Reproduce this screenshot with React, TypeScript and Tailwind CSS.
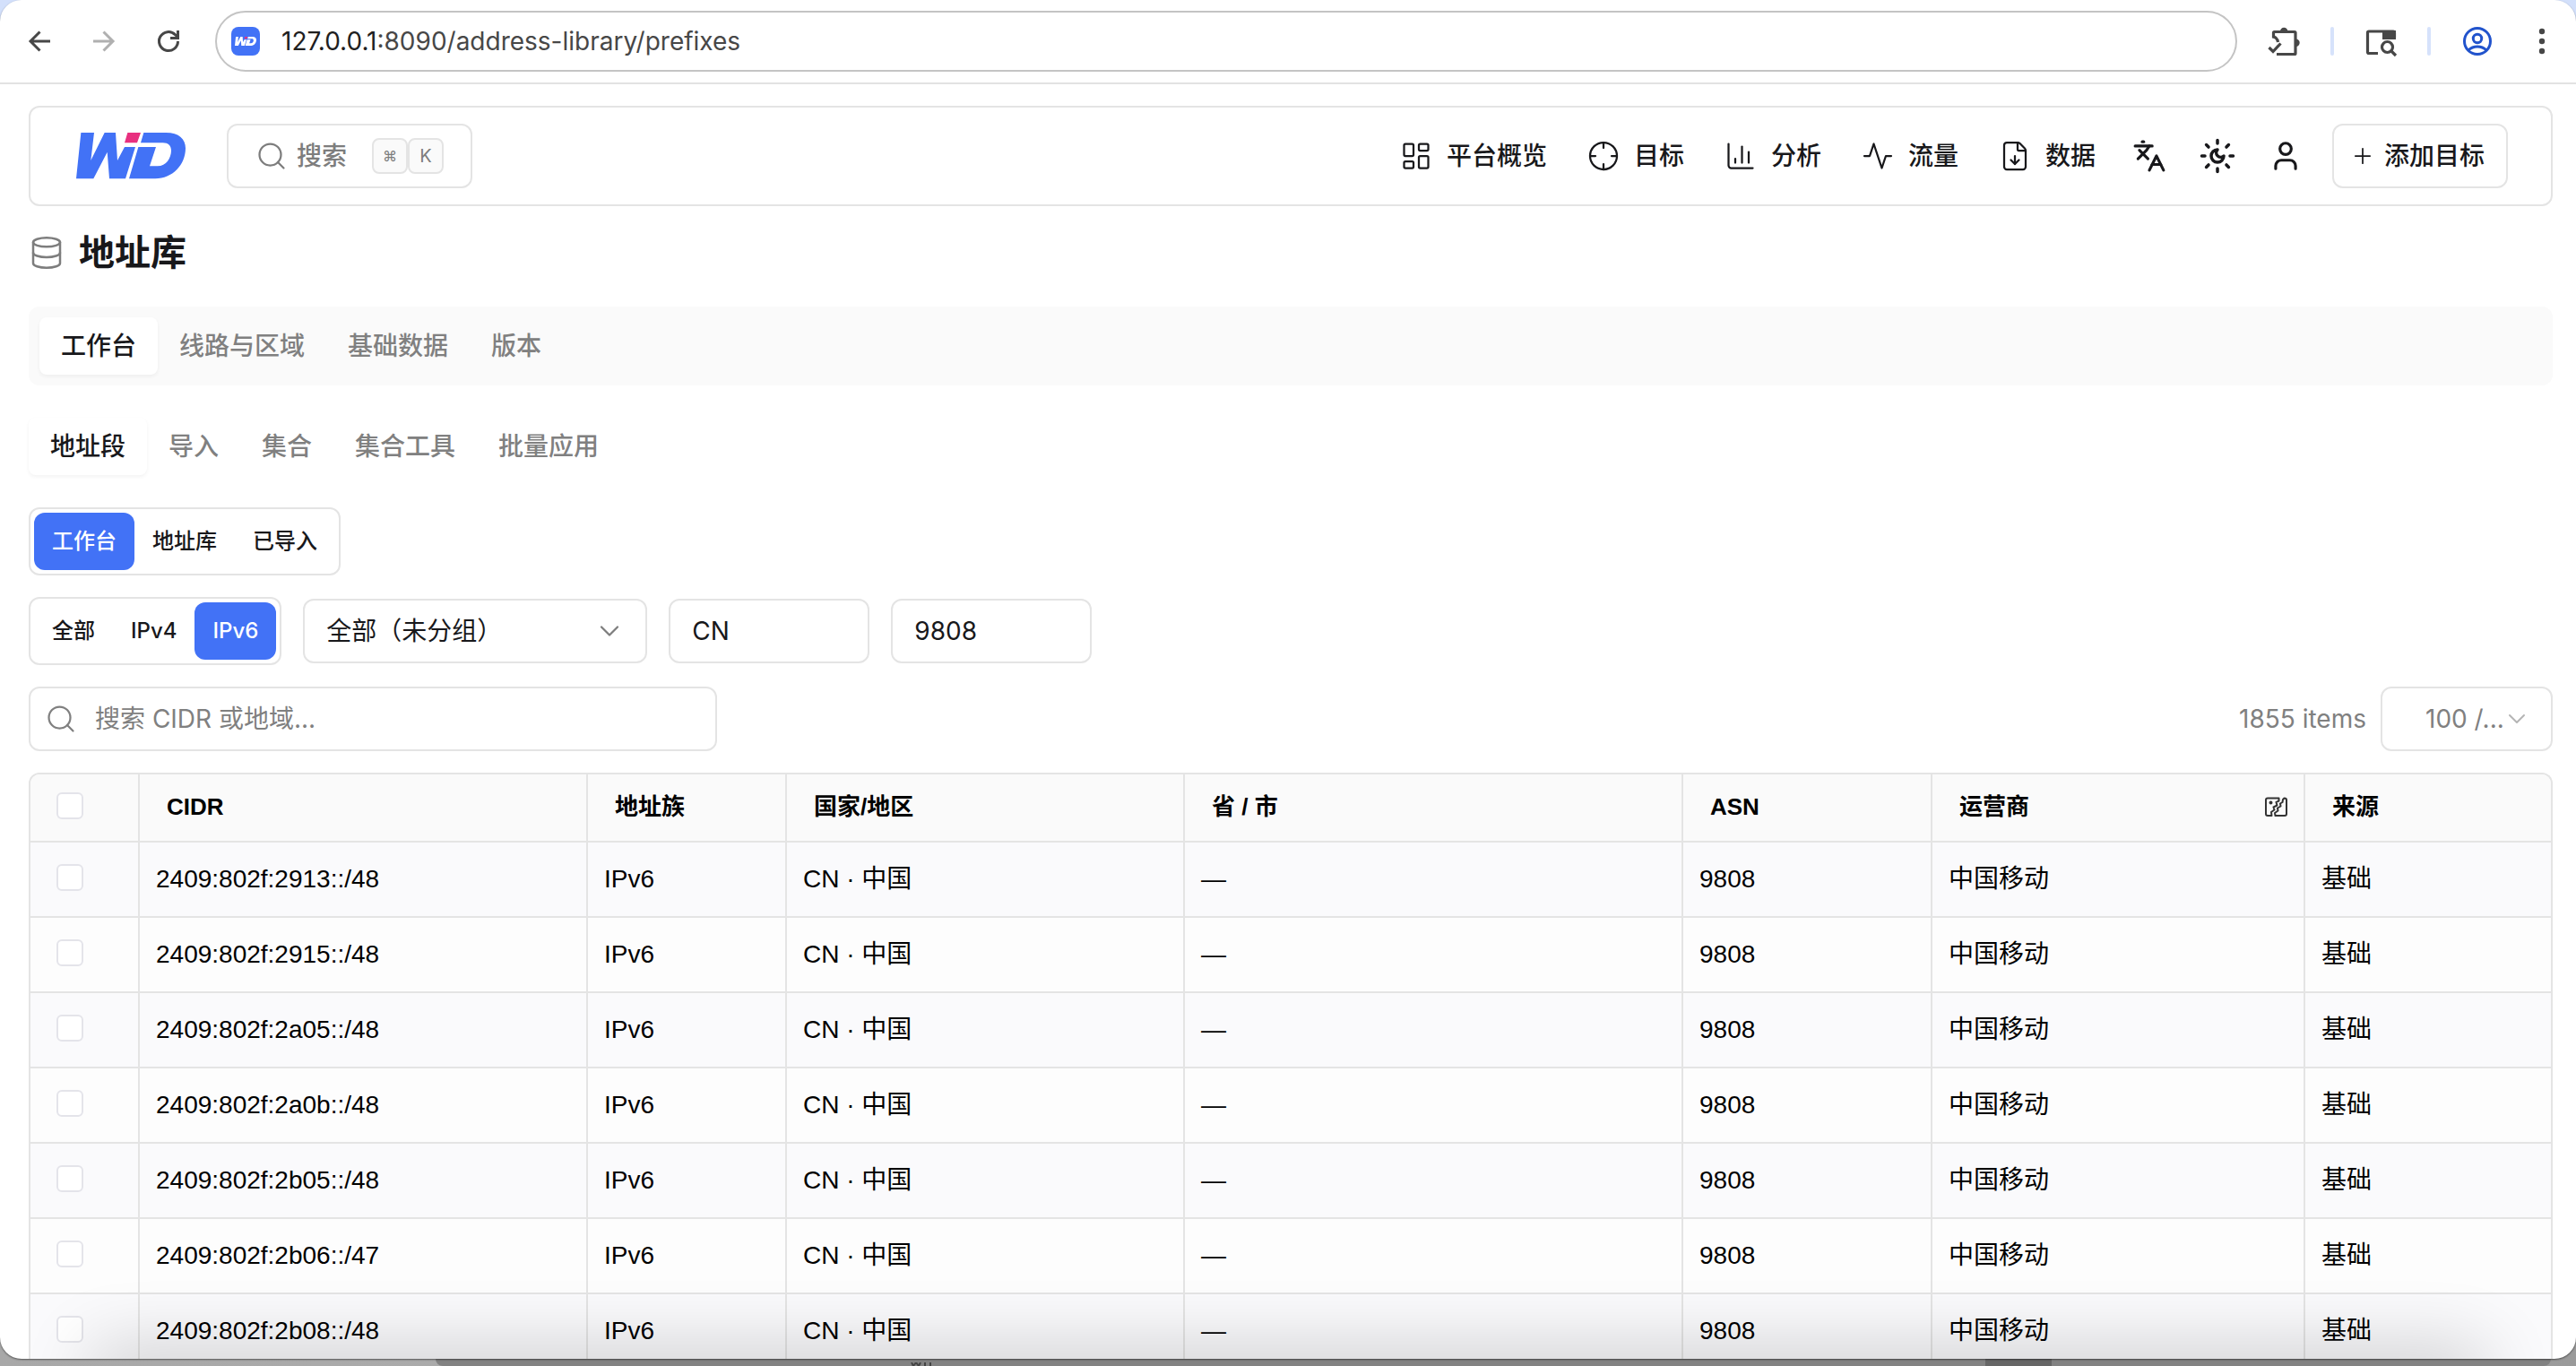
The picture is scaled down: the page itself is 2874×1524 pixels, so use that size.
import React from "react";
import {
  ChartColumn,
  ChevronDown,
  Crosshair,
  Database,
  FileDown,
  Languages,
  LayoutDashboard,
  Plus,
  Search,
  User,
} from "lucide-react";

const cjk = "font-['Inter','Noto_Sans_CJK_SC',sans-serif]";

function LogoMark({ className, plain }: { className: string; plain?: boolean }) {
  const main = plain ? "#ffffff" : "#4272f6";
  return (
    <svg viewBox="0 0 366 154" className={className} aria-hidden="true">
      <path
        fill={main}
        d="M16 0H60L49 93L95 0H132L138 93L162 48H198L165 154H111L104 65L58 154H0Z"
      />
      <path fill="#e8307f" d="M172 0H216L204 34H162Z" />
      <path
        fill={main}
        d="M226 0H300C345 0 366 22 366 52C366 108 322 154 265 154H177L208 48H267L246 112H272C302 112 318 84 318 60C318 44 308 34 290 34H216Z"
      />
    </svg>
  );
}

function PulseIcon() {
  return (
    <svg viewBox="0 0 24 24" className="size-9" fill="none" stroke="currentColor" strokeWidth="1.5" strokeLinecap="round" strokeLinejoin="round" aria-hidden="true">
      <path d="M22 12h-4l-3 9L9 3l-3 9H2" />
    </svg>
  );
}

function ThemeIcon() {
  return (
    <svg viewBox="0 0 24 24" className="size-[42px] shrink-0" fill="none" stroke="currentColor" strokeWidth="2" strokeLinecap="round" strokeLinejoin="round" aria-hidden="true">
      <path d="M12 8a2.830 2.830 0 0 0 4 4 4 4 0 1 1-4-4" />
      <path d="M12 2v2M12 20v2M4.900 4.900l1.400 1.400M17.700 17.700l1.400 1.400M2 12h2M20 12h2M6.300 17.700l-1.400 1.400M19.100 4.900l-1.400 1.400" />
    </svg>
  );
}

function BrowserBar() {
  return (
    <header className="flex h-[94px] shrink-0 items-center border-b-2 border-[#e2e2e2] pl-7 pr-[22px] text-[#474747]">
      <div className="flex items-center gap-10">
        <button aria-label="后退" className="size-8">
          <svg viewBox="0 0 32 32" className="size-8" fill="none" stroke="#474747" strokeWidth="3">
            <path d="M28 16H6M16.500 5.500L6 16L16.500 26.500" />
          </svg>
        </button>
        <button aria-label="前进" className="size-8">
          <svg viewBox="0 0 32 32" className="size-8" fill="none" stroke="#b0b0b0" strokeWidth="3">
            <path d="M4 16H26M15.500 5.500L26 16L15.500 26.500" />
          </svg>
        </button>
        <button aria-label="重新加载" className="size-8">
          <svg viewBox="0 0 32 32" className="size-8" fill="none" stroke="#474747" strokeWidth="3">
            <path d="M26.500 16A10.500 10.500 0 1 1 23.400 8.600L26 11" />
            <path d="M26.500 4V12.500H18" />
          </svg>
        </button>
      </div>
      <div className="ml-9 flex h-[68px] min-w-0 flex-1 items-center rounded-full border-2 border-[#c4c4c4] pl-4">
        <span className="flex size-8 shrink-0 items-center justify-center rounded-lg bg-[#4272f6]">
          <LogoMark className="w-6" plain />
        </span>
        <div
          role="textbox"
          aria-label="网址"
          className="ml-6 font-['Inter',sans-serif] text-[28px] leading-9 text-[#474747]"
        >
          <span className="text-[#1f1f1f]">127.0.0.1</span>:8090/address-library/prefixes
        </div>
      </div>
      <div className="ml-8 flex items-center">
        <button aria-label="扩展程序" className="h-10 w-10">
          <svg viewBox="0 0 40 40" className="size-10" fill="none" stroke="#474747" strokeWidth="3.200">
            <path d="M8.500 16.500V10.500Q8.500 9.500 9.500 9.500H32Q33 9.500 33 10.500V33.500Q33 34.500 32 34.500H12" />
            <path d="M8 14.500Q13 16.500 13.500 21" />
            <path d="M3.500 27L8 31.500L16.500 22.500" />
            <path d="M16 9a4.200 4.200 0 0 1 8.400 0zM33.500 17.500a4.200 4.200 0 0 1 0 8.400z" fill="#474747" stroke="none" />
          </svg>
        </button>
        <span className="ml-8 h-8 w-1 rounded-full bg-[#d6e2fb]" />
        <button aria-label="搜索标签页" className="ml-8 h-10 w-10">
          <svg viewBox="0 0 40 40" className="size-10" fill="none" stroke="#474747" strokeWidth="3.200">
            <path d="M17 33.500H7Q5.500 33.500 5.500 32V10.500Q5.500 9 7 9H34Q35.500 9 35.500 10.500V16" />
            <path d="M22 8h15v10h-15z" fill="#474747" stroke="none" />
            <circle cx="27.500" cy="26.500" r="6" />
            <path d="M32 31L37 36" />
          </svg>
        </button>
        <span className="ml-8 h-8 w-1 rounded-full bg-[#d6e2fb]" />
        <button aria-label="个人资料" className="ml-9 size-8">
          <svg viewBox="0 0 32 32" className="size-8" fill="none" stroke="#2153cc" strokeWidth="3">
            <circle cx="16" cy="16" r="14.500" />
            <circle cx="16" cy="13" r="4.700" />
            <path d="M6 26Q10 22 16 22T26 26" />
          </svg>
        </button>
        <button aria-label="菜单" className="ml-10 size-8">
          <svg viewBox="0 0 32 32" className="size-8" fill="#474747">
            <circle cx="16" cy="5" r="3.200" />
            <circle cx="16" cy="16" r="3.200" />
            <circle cx="16" cy="27" r="3.200" />
          </svg>
        </button>
      </div>
    </header>
  );
}

const navItems = [
  { label: "平台概览", icon: <LayoutDashboard className="size-9" strokeWidth={1.5} /> },
  { label: "目标", icon: <Crosshair className="size-9" strokeWidth={1.5} /> },
  { label: "分析", icon: <ChartColumn className="size-9" strokeWidth={1.5} /> },
  { label: "流量", icon: <PulseIcon /> },
  { label: "数据", icon: <FileDown className="size-9" strokeWidth={1.5} /> },
];

function AppHeader() {
  return (
    <div className="flex h-28 items-center rounded-xl border-2 border-[#e4e4e4] pl-[51px] pr-12">
      <LogoMark className="w-[122px]" />
      <button className="ml-[46px] flex h-[72px] items-center rounded-xl border-2 border-[#e4e4e4] px-[30px] text-[28px] font-medium text-[#7d7d7d]">
        <Search className="size-9" strokeWidth={1.5} />
        <span className="ml-2.5">搜索</span>
        <span className="ml-7 flex text-xl font-normal">
          <kbd className="flex size-10 items-center justify-center rounded-lg border-2 border-[#e4e4e4] bg-[#fafafa] font-['Inter','DejaVu_Sans',sans-serif] text-base">⌘</kbd>
          <kbd className="flex size-10 items-center justify-center rounded-lg border-2 border-[#e4e4e4] bg-[#fafafa] font-['Inter',sans-serif]">K</kbd>
        </span>
      </button>
      <nav className="ml-auto flex items-center gap-[45px] text-[28px] font-medium text-[#18181b]">
        {navItems.map((item) => (
          <a key={item.label} href="#" className="flex items-center gap-4 whitespace-nowrap">
            {item.icon}
            {item.label}
          </a>
        ))}
      </nav>
      <div className="ml-10 flex items-center gap-9 text-[#18181b]">
        <button aria-label="语言" className="flex size-10 items-center justify-center">
          <Languages className="size-[38px]" strokeWidth={2} />
        </button>
        <button aria-label="主题" className="flex size-10 items-center justify-center">
          <ThemeIcon />
        </button>
        <button aria-label="账户" className="flex size-10 items-center justify-center">
          <User className="size-[38px]" strokeWidth={2} />
        </button>
      </div>
      <button className="ml-8 flex h-[72px] items-center gap-2.5 rounded-xl border-2 border-[#e4e4e4] pl-[18px] pr-6 text-[28px] font-medium text-[#18181b]">
        <Plus className="size-7" strokeWidth={1.5} />
        添加目标
      </button>
    </div>
  );
}

function Tabs({ items, filled }: { items: string[]; filled?: boolean }) {
  return (
    <div role="tablist" className={filled ? "mt-8 flex rounded-xl bg-[#fafafa] p-3" : "mt-9 flex"}>
      {items.map((label, i) => (
        <button
          key={label}
          role="tab"
          aria-selected={i === 0}
          className={
            i === 0
              ? "h-16 rounded-lg bg-white px-6 text-[28px] font-medium text-[#18181b] shadow-[0_2px_4px_rgba(0,0,0,0.05)]"
              : "h-16 px-6 text-[28px] font-medium text-[#808080]"
          }
        >
          {label}
        </button>
      ))}
    </div>
  );
}

function Segmented({ items, active }: { items: string[]; active: number }) {
  return (
    <div className="flex h-[76px] w-fit items-center rounded-xl border-2 border-[#e4e4e4] p-1">
      {items.map((label, i) => (
        <button
          key={label}
          aria-pressed={i === active}
          className={
            i === active
              ? "h-16 rounded-xl bg-[#4272f6] px-5 text-2xl font-medium text-white"
              : "h-16 rounded-xl px-5 text-2xl font-medium text-[#18181b]"
          }
        >
          {label}
        </button>
      ))}
    </div>
  );
}

function ColumnImageIcon() {
  return (
    <svg viewBox="0 0 26 24" className="h-6 w-[26px]" fill="none" stroke="#333" strokeWidth="2" strokeLinejoin="round">
      <path d="M16.500 2.500H4Q2 2.500 2 4.500V20Q2 22 4 22H8.500L8 18L11.500 15.500L10.500 12.500L14.500 10.500L13.500 7L16.500 5.500Z" />
      <path d="M22.500 2.500Q25 2.500 25 4.500V20Q25 22 23 22H12.500L12 19L15.500 16.500L15 13.500L18.500 11.500L18 8.500L20.500 7L21 4Z" />
      <circle cx="7.500" cy="7.500" r="1" fill="#333" />
    </svg>
  );
}

const columns = [
  { label: "CIDR", width: "w-[500px]" },
  { label: "地址族", width: "w-[222px]" },
  { label: "国家/地区", width: "w-[444px]" },
  { label: "省 / 市", width: "w-[556px]" },
  { label: "ASN", width: "w-[278px]" },
  { label: "运营商", width: "w-[416px]" },
  { label: "来源", width: "w-[274px]" },
];

const prefixes = [
  "2409:802f:2913::/48",
  "2409:802f:2915::/48",
  "2409:802f:2a05::/48",
  "2409:802f:2a0b::/48",
  "2409:802f:2b05::/48",
  "2409:802f:2b06::/47",
  "2409:802f:2b08::/48",
];

function Check({ label }: { label: string }) {
  return (
    <input
      type="checkbox"
      aria-label={label}
      className="block size-[30px] appearance-none rounded-md border-2 border-[#e4e4ea] bg-white"
    />
  );
}

function PrefixTable() {
  const cell = "border-b-2 border-r-2 border-[#e4e4e4] px-[18px] last:border-r-0";
  return (
    <div className="mt-6 overflow-hidden rounded-t-xl border-2 border-b-0 border-[#e4e4e4]">
      <table className="w-full table-fixed border-separate border-spacing-0 font-['Liberation_Sans','Noto_Sans_CJK_SC',sans-serif] text-[28px] text-black">
        <thead>
          <tr className="h-[76px] bg-[#fafafa]">
            <th className="w-[122px] border-b-2 border-r-2 border-[#e4e4e4] pb-1 pl-[29px]">
              <Check label="全选" />
            </th>
            {columns.map((c) => (
              <th
                key={c.label}
                className={`${c.width} border-b-2 border-r-2 border-[#e4e4e4] pb-0.5 pl-[30px] pr-[18px] text-left text-[26px] font-bold last:border-r-0`}
              >
                <div className="flex items-center justify-between">
                  {c.label}
                  {c.label === "运营商" && (
                    <button aria-label="编辑运营商">
                      <ColumnImageIcon />
                    </button>
                  )}
                </div>
              </th>
            ))}
          </tr>
        </thead>
        <tbody>
          {prefixes.map((p) => (
            <tr key={p} className="h-[84px] odd:bg-[#fafafc] even:bg-[#fdfdfd]">
              <td className="border-b-2 border-r-2 border-[#e4e4e4] pb-1 pl-[29px]">
                <Check label={p} />
              </td>
              <td className={cell}>{p}</td>
              <td className={cell}>IPv6</td>
              <td className={cell}>CN · 中国</td>
              <td className={cell}>—</td>
              <td className={cell}>9808</td>
              <td className={cell}>中国移动</td>
              <td className={cell}>基础</td>
            </tr>
          ))}
        </tbody>
      </table>
    </div>
  );
}

function Desktop() {
  return (
    <div className="absolute inset-x-0 bottom-0 flex h-12 items-end bg-gradient-to-r from-[#a8a8a8] via-[#b0b0b0] to-[#9a9a9a]">
      <div className="ml-[486px] mr-7 flex h-2 flex-1 items-start rounded-bl-lg rounded-br-lg bg-[#828282] pl-[530px] pr-[557px]">
        <svg viewBox="0 0 24 4" className="mt-1 h-1 w-6" fill="none" stroke="#444" strokeWidth="2" aria-hidden="true">
          <path d="M1 0L3 4L6 0L9 4L11 0M16 0V4M22 0V4" />
        </svg>
        <div className="ml-auto h-2 w-[74px] bg-[#666666]" />
      </div>
    </div>
  );
}

export default function App() {
  return (
    <div className={`relative h-screen overflow-hidden bg-[#d3e0fb] pb-2 ${cjk}`}>
      <Desktop />
      <div className="relative flex h-full flex-col overflow-hidden rounded-3xl bg-white shadow-[0_1px_2px_rgba(0,0,0,0.5)]">
        <BrowserBar />
        <main className="px-8 pb-0 pr-[26px] pt-6">
          <AppHeader />
          <h1 className="mt-6 flex items-center gap-4 text-[40px] font-bold leading-[56px] text-[#18181b]">
            <Database className="size-10 text-[#7d7d7d]" strokeWidth={1.5} />
            地址库
          </h1>
          <Tabs items={["工作台", "线路与区域", "基础数据", "版本"]} filled />
          <Tabs items={["地址段", "导入", "集合", "集合工具", "批量应用"]} />
          <div className="mt-9">
            <Segmented items={["工作台", "地址库", "已导入"]} active={0} />
          </div>
          <div className="mt-6 flex items-center gap-6 text-[28px] text-[#18181b]">
            <Segmented items={["全部", "IPv4", "IPv6"]} active={2} />
            <div className="relative">
              <select aria-label="分组" className="h-[72px] w-96 appearance-none rounded-xl border-2 border-[#e4e4e4] bg-white px-6">
                <option>全部（未分组）</option>
              </select>
              <ChevronDown className="pointer-events-none absolute right-6 top-[18px] size-9 text-[#7d7d7d]" strokeWidth={1.5} />
            </div>
            <input aria-label="国家" defaultValue="CN" className="h-[72px] w-56 rounded-xl border-2 border-[#e4e4e4] px-6" />
            <input aria-label="ASN" defaultValue="9808" className="h-[72px] w-56 rounded-xl border-2 border-[#e4e4e4] px-6" />
          </div>
          <div className="mt-6 flex items-center text-[28px] text-[#808080]">
            <label className="flex h-[72px] w-[768px] items-center gap-5 rounded-xl border-2 border-[#e4e4e4] px-4">
              <Search className="size-9 shrink-0" strokeWidth={1.5} />
              <input
                aria-label="搜索"
                placeholder="搜索 CIDR 或地域..."
                className="min-w-0 flex-1 placeholder:text-[#808080]"
              />
            </label>
            <span className="ml-auto">1855 items</span>
            <div className="relative ml-4">
              <select aria-label="每页条数" className="h-[72px] w-48 appearance-none rounded-xl border-2 border-[#e4e4e4] bg-white pl-12 pr-8">
                <option>100 /...</option>
              </select>
              <ChevronDown className="pointer-events-none absolute right-6 top-5 size-8 text-[#b5b5b5]" strokeWidth={1.5} />
            </div>
          </div>
          <PrefixTable />
        </main>
        <div className="pointer-events-none absolute inset-x-28 -bottom-10 h-10 shadow-[0_0_80px_10px_rgba(0,0,0,0.2)]" />
      </div>
    </div>
  );
}
